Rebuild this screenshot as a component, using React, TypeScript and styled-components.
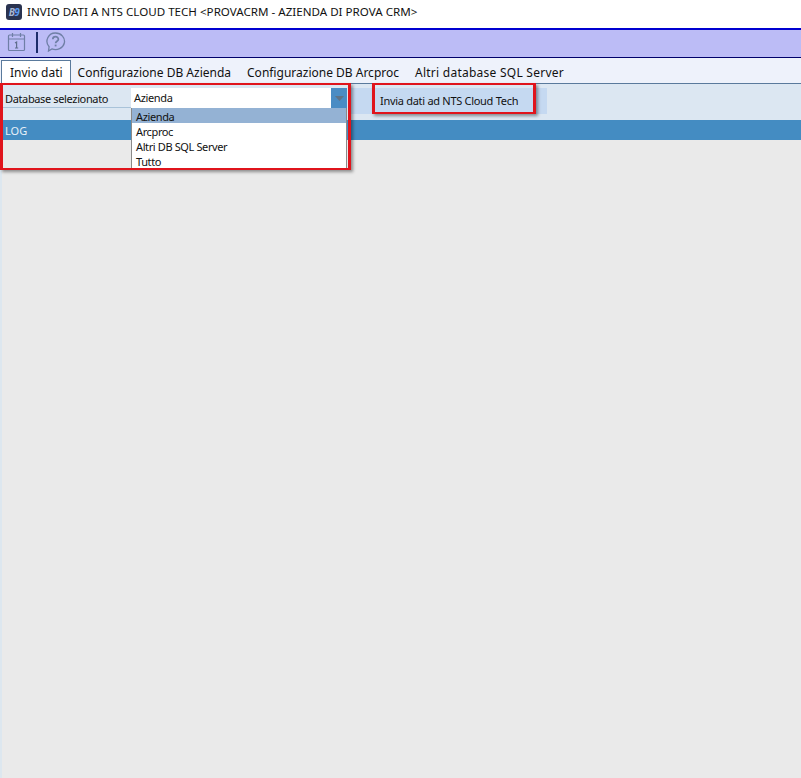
import styled, { createGlobalStyle } from "styled-components";

const Global = createGlobalStyle`
  html, body { margin: 0; padding: 0; background: #eaeaea; }
  #root { width: 801px; height: 778px; }
  * { box-sizing: border-box; }
`;

const Window = styled.div`
  position: relative;
  width: 801px;
  height: 778px;
  display: flex;
  flex-direction: column;
  overflow: hidden;
  background: #eaeaea;
  color: #111;
  font-family: "Noto Sans", "Liberation Sans", sans-serif;
`;

/* title bar */
const TitleBar = styled.div`
  height: 30px;
  flex: none;
  padding: 0 0 5px 6px;
  display: flex;
  align-items: center;
  gap: 5px;
  background: #fff;
  border-bottom: 2px solid #0000d0;
  font-size: 11.6px;
`;

const AppIcon = styled.div`
  width: 16px;
  height: 16px;
  border-radius: 3px;
  background: #2a3350;
  color: #a9b6d2;
  font-size: 10px;
  font-weight: 700;
  font-style: italic;
  line-height: 16px;
  text-align: center;
  letter-spacing: -0.5px;
`;

const AppIconNine = styled.span`
  color: #5c9bf0;
`;

/* toolbar */
const Toolbar = styled.div`
  height: 28px;
  flex: none;
  padding: 0 0 3px 7px;
  display: flex;
  align-items: center;
  background: #bcbcf6;
  border-bottom: 1px solid #00006a;
`;

const Divider = styled.div`
  width: 2px;
  height: 21px;
  margin: 0 7px 0 10px;
  background: #1c2c6a;
`;

/* tabs */
const TabStrip = styled.div`
  height: 26px;
  flex: none;
  padding-left: 1px;
  display: flex;
  align-items: flex-end;
  background: #eef2fb;
  border-bottom: 1px solid #5a7a9c;
`;

const Tab = styled.div<{ $active?: boolean; $track?: number }>`
  height: ${({ $active }) => ($active ? "24px" : "23px")};
  padding: ${({ $active }) => ($active ? "0 7px 0 8px" : "0 7px")};
  display: flex;
  align-items: center;
  font-size: 12px;
  letter-spacing: ${({ $track }) => $track ?? 0}px;
  background: ${({ $active }) => ($active ? "#fff" : "transparent")};
  border: 1px solid ${({ $active }) => ($active ? "#5a7a9c" : "transparent")};
  border-bottom: none;
  margin-bottom: ${({ $active }) => ($active ? "-1px" : "0")};
  margin-right: ${({ $active }) => ($active ? "-1px" : "0")};
`;

/* form row */
const FormRow = styled.div`
  height: 36px;
  flex: none;
  display: flex;
  align-items: flex-start;
  background: #dce7f2;
  font-size: 11px;
  letter-spacing: -0.36px;
`;

const FieldLabel = styled.div`
  width: 129px;
  height: 24px;
  margin-left: 2px;
  padding: 6px 0 0 3px;
  display: flex;
  align-items: center;
  border-bottom: 1px solid #a9c3d9;
`;

const Combo = styled.div`
  width: 216px;
  height: 20px;
  margin-top: 4px;
  padding-left: 3px;
  display: flex;
  align-items: center;
  justify-content: space-between;
  background: #fff;
`;

const ComboValue = styled.span`
  margin-top: -2px;
`;

const ComboArrow = styled.div`
  width: 16px;
  height: 20px;
  display: flex;
  align-items: center;
  justify-content: center;
  background: #4a8cc4;
`;

const SendButton = styled.div`
  width: 197px;
  height: 26px;
  margin: 4px 0 0 3px;
  padding: 0 0 2px 30px;
  display: flex;
  align-items: center;
  background: #c5d9f1;
  letter-spacing: -0.29px;
`;

/* log header */
const LogBar = styled.div`
  height: 20px;
  flex: none;
  padding-left: 5px;
  display: flex;
  align-items: center;
  background: #448cc2;
  color: #e8f1f8;
  font-size: 11px;
`;

/* empty log area, with the pale window edge on its left */
const LogArea = styled.div`
  flex: 1;
  border-left: 2px solid #dde7ef;
`;

/* open combo list */
const DropList = styled.div`
  position: absolute;
  left: 131px;
  top: 108px;
  width: 216px;
  height: 61px;
  background: #fff;
  border: 1px solid #8a8a8a;
  border-top: none;
  font-size: 11px;
  letter-spacing: -0.38px;
  z-index: 2;
`;

const DropItem = styled.div<{ $selected?: boolean }>`
  height: 15px;
  padding-left: 4px;
  line-height: 17px;
  background: ${({ $selected }) => ($selected ? "#94b2d4" : "transparent")};
`;

/* red callouts drawn on the screenshot */
const Callout = styled.div<{ $l: number; $t: number; $w: number; $h: number }>`
  position: absolute;
  left: ${({ $l }) => $l}px;
  top: ${({ $t }) => $t}px;
  width: ${({ $w }) => $w}px;
  height: ${({ $h }) => $h}px;
  border-style: solid;
  border-color: #e0141c;
  border-width: 2px 3px;
  box-shadow: 2px 2px 3px rgba(0, 0, 0, 0.4);
  z-index: 3;
`;

function CalendarIcon() {
  return (
    <svg width="19" height="20" viewBox="0 0 19 20" fill="none" stroke="#6f7fa6" strokeWidth="1.2">
      <rect x="1.5" y="3" width="16" height="15.5" rx="1" />
      <path d="M1.5 7h16M5.5 1v4M13.5 1v4" />
      <path d="M8 11l1.6-1v6M8 16h3.2" stroke="#5f6d8c" />
    </svg>
  );
}

function HelpIcon() {
  return (
    <svg width="21" height="20" viewBox="0 0 21 20" fill="none" stroke="#6f7fa6" strokeWidth="1.3">
      <path d="M10.5 1a9 8.3 0 1 1-3.6 15.9L3.5 19l.6-4.2A8.3 8.3 0 0 1 10.5 1z" />
      <path d="M7.8 7.2c0-3.4 5.6-3.4 5.6 0 0 2-2.8 2-2.8 4" strokeWidth="1.7" />
      <path d="M10.6 12.6v1.8" strokeWidth="1.8" />
    </svg>
  );
}

export default function App() {
  return (
    <Window>
      <Global />
      <TitleBar>
        <AppIcon>
          B<AppIconNine>9</AppIconNine>
        </AppIcon>
        INVIO DATI A NTS CLOUD TECH &lt;PROVACRM - AZIENDA DI PROVA CRM&gt;
      </TitleBar>
      <Toolbar>
        <CalendarIcon />
        <Divider />
        <HelpIcon />
      </Toolbar>
      <TabStrip>
        <Tab $active>Invio dati</Tab>
        <Tab>Configurazione DB Azienda</Tab>
        <Tab>Configurazione DB Arcproc</Tab>
        <Tab $track={0.25}>Altri database SQL Server</Tab>
      </TabStrip>
      <FormRow>
        <FieldLabel>Database selezionato</FieldLabel>
        <Combo>
          <ComboValue>Azienda</ComboValue>
          <ComboArrow>
            <svg width="9" height="5" viewBox="0 0 9 5">
              <path d="M0 0h9L4.5 5z" fill="#5f7286" />
            </svg>
          </ComboArrow>
        </Combo>
        <SendButton>Invia dati ad NTS Cloud Tech</SendButton>
      </FormRow>
      <LogBar>LOG</LogBar>
      <LogArea />
      <DropList>
        <DropItem $selected>Azienda</DropItem>
        <DropItem>Arcproc</DropItem>
        <DropItem>Altri DB SQL Server</DropItem>
        <DropItem>Tutto</DropItem>
      </DropList>
      <Callout $l={0} $t={83} $w={351} $h={87} />
      <Callout $l={372} $t={83} $w={164} $h={31} />
    </Window>
  );
}
